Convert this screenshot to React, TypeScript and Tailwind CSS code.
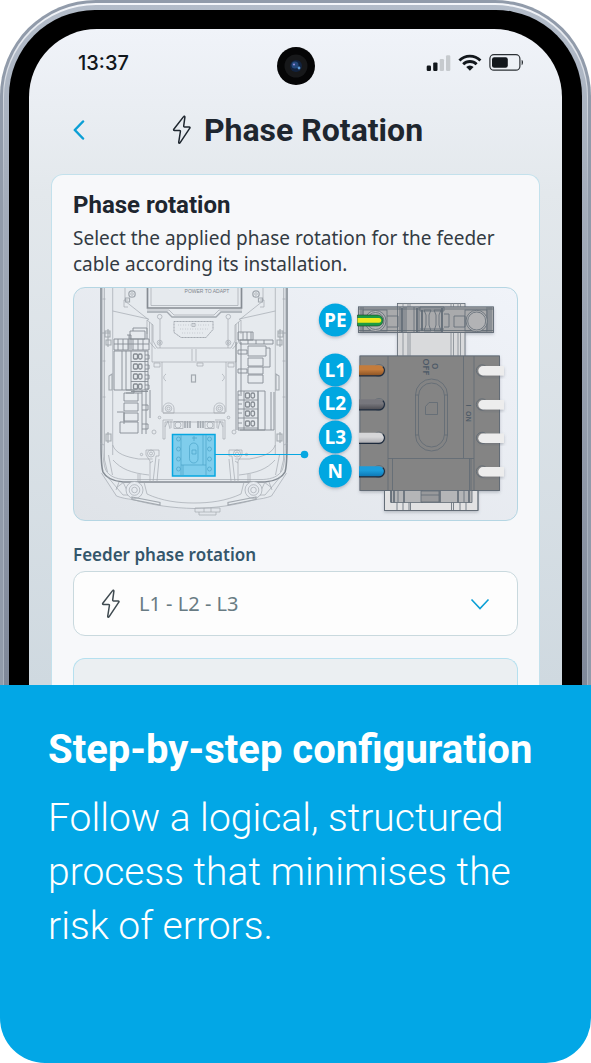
import type { ReactNode } from "react";

const feederOptions = ["L1 - L2 - L3", "L2 - L3 - L1", "L3 - L1 - L2"];

const badges = [
  { label: "PE", y: 320 },
  { label: "L1", y: 370 },
  { label: "L2", y: 403 },
  { label: "L3", y: 437 },
  { label: "N", y: 471 },
];

const wires = [
  { y: 370.5, from: "#c47c3c", to: "#8a5224" },
  { y: 404.5, from: "#77777d", to: "#4c4c52" },
  { y: 438, from: "#d6d6d8", to: "#a8a8ac" },
  { y: 471.5, from: "#1c9ddb", to: "#0d76b4" },
];

const BoltIcon = () => (
  <svg width="20" height="30" viewBox="0 0 20 30" fill="none" aria-hidden="true">
    <path
      d="M11.6 1.6 1.8 14.2c-.5.7-.1 1.3.6 1.3h5.2c.6 0 .9.4.8 1L6.7 27.4c-.1.9.8 1.1 1.3.4l9.8-14.6c.5-.7.1-1.3-.6-1.3h-4.7c-.6 0-.9-.4-.8-1l1.2-8.7c.1-.9-.8-1.3-1.3-.6Z"
      stroke="currentColor"
      strokeWidth="1.5"
      strokeLinejoin="round"
    />
  </svg>
);

const StatusIcons = () => (
  <svg width="98" height="20" viewBox="426 51 98 20" aria-hidden="true">
    <g fill="#12171c">
      <rect x="426.7" y="63.5" width="4.3" height="5.5" rx="1.2" />
      <rect x="433.2" y="60.4" width="4.3" height="8.6" rx="1.2" />
    </g>
    <g fill="#c6cace">
      <rect x="439.7" y="57" width="4.3" height="12" rx="1.2" />
      <rect x="446" y="53.3" width="4.3" height="15.7" rx="1.2" />
    </g>
    <g fill="none" stroke="#12171c" strokeWidth="2.8">
      <path d="M459.4 58.4a14.8 14.8 0 0 1 21 0" />
      <path d="M463.2 62.3a9.4 9.4 0 0 1 13.4 0" />
    </g>
    <path d="M466.2 65.1a5.2 5.2 0 0 1 7.4 0l-3.7 3.600Z" fill="#12171c" />
    <rect x="489.9" y="52.7" width="30" height="15.5" rx="4" fill="none" stroke="#2b3035" strokeWidth="1.2" />
    <rect x="492" y="55.200" width="15.8" height="10.5" rx="2.2" fill="#12171c" />
    <path d="M521.7 57.800c1.6.8 1.6 4.6 0 5.4Z" fill="#12171c" />
  </svg>
);

// One side of the charger housing, drawn again mirrored for the other side
const HousingSide = () => (
  <g>
    <path d="M101 287V443c0 14 0 23 2 29 3 6 10 9 20 10H194" strokeWidth="1.6" stroke="#858c94" />
    <path d="M102.8 287V443c0 15 1 22 3 27 3 6 10 9 19 9.5H194" />
    <path d="M104.5 287V460l3 12M112.7 287V455M108.5 455l4 20" />
    <path d="M100 443l4 2M102.5 299h3M102.5 361h3M102.5 397h3" />
    <path d="M101.5 473l15 23c5 2 11 3 16 3.5 21 6 41 8.5 61.5 9" />
    <path d="M107 476l10 12 6 7h16M119 482l-3 8M123 482l7 15M144 482l3 12c15 7 31 9 47 9M116 488l8-6" />
    <circle cx="134.5" cy="490" r="8.5" fill="#e6eaef" />
    <circle cx="134.5" cy="490" r="5.3" />
    <circle cx="134.5" cy="490" r="2.8" />
    <path d="M132 497l28 5.5v2.5l-28-5.5Z" strokeWidth="1.2" />
    <path d="M105 331h5v6h-5ZM106 340h5v5h-5ZM108 329v18M106 434h5v7h-5ZM108 432v11M110 333h-8M112 374v16h-3v-14Z" strokeWidth="1.1" />
    <path d="M112.7 311l36 8M125 287v14l24 19M128 300h-4v7h4" />
    <circle cx="132" cy="294" r="3.2" strokeWidth="1.3" />
    <circle cx="132" cy="294" r="1.3" />
    <path d="M125.5 298h4v4h-4Z" strokeWidth="1.2" />
    <path d="M147 320l6 5v16l4 7h3V319M147 320v14M149.5 322v20l6 7M160 348h34M152 362h42M152 324v38" />
    <circle cx="159.7" cy="316.7" r="2.3" />
    <circle cx="159.7" cy="342.7" r="2.5" />
    <circle cx="159.7" cy="342.7" r="1" />
    <path d="M162 362V412M154 363h6v4h-6ZM166 374c-3 2-3 5 0 7" />
    <path d="M163 413v-4c0-8 11-8 11 0v4Z" />
    <circle cx="168.5" cy="408.5" r="3.2" />
    <circle cx="168.5" cy="408.5" r="1.5" />
    <circle cx="159.5" cy="417.5" r="1.3" />
    <path d="M163 413h31M165 422h29M165 422v17h-2v-19h10M165 427l3-6 2 8M171 421v7" />
    <rect x="174" y="421.5" width="9" height="7" />
    <circle cx="178" cy="425" r="3" />
    <path d="M185 421v7M187.5 421v7M190 421v7" strokeWidth="1.6" />
    <path d="M146 450h13v6h-3l-3 26M146 450v5l4 6v21M153 461l-3 2" />
    <circle cx="151" cy="453.5" r="3.5" />
    <circle cx="151" cy="453.5" r="1.5" />
    <circle cx="141.5" cy="454.5" r="1.2" />
    <path d="M112.7 445c3 9 14 12 26 14h14M113 460c8 9 18 13 36 15M138 474v7M140 474v7" />
    <path d="M159 459l-2 22" />
    <circle cx="154" cy="432" r="2" />
  </g>
);

const ChargerOutline = () => (
  <g fill="none" stroke="#a3a9b0" strokeWidth="0.7">
    <path d="M101 287v185l16 24c48 16 106 16 154 0l16-24V287Z" fill="#e6eaee" stroke="none" />
    <HousingSide />
    <g transform="translate(388 0) scale(-1 1)">
      <HousingSide />
    </g>

    {/* display */}
    <path d="M147.5 287v21h94v-21" stroke="#868c93" strokeWidth="1.7" />
    <path d="M151 287v18.5h87V287" />
    <path d="M147 312h20l5 5h44l5-5h21" strokeWidth="1.3" />
    <path d="M147 310h22l5 5h40l5-5h23" />
    <text x="207" y="293" textAnchor="middle" fontSize="5" fill="#7f868d" stroke="none" className="font-['Liberation_Sans']">
      POWER TO ADAPT
    </text>
    <path d="M174 321.5h39v8l-7 8h-25l-7-5Z" />
    <path d="M174 321.5h39v8l-7 8h-25l-7-5Z" stroke="#8d949b" strokeDasharray="0.6 2.4" />
    <path d="M178 325h31M180 329h28M182 333h22" strokeDasharray="0.7 1.8" />
    <rect x="192" y="323.5" width="3" height="3" />
    <rect x="191.5" y="375" width="4" height="7" strokeWidth="1.2" />
    <path d="M192 349v12M196 349v12M197 363h6v3h-6Z" />

    {/* left terminals and breakers */}
    <g stroke="#868c93" strokeWidth="0.9">
      <path d="M114 339h35v11h-35ZM114 344h35M118 339v11M123 339v11M128 339v11M133 339v11M138 339v11M143 339v11" />
      <path d="M130 331h15v8h-15ZM133 331v-3h14v11M127 335h4v14M129 335v14" />
      <path d="M114 351h34v39h-34ZM122 351v39M126 351v39M131 351v39M145 351v39" />
      {[354, 364, 374, 384].map((y) => (
        <g key={y}>
          <rect x="133.5" y={y} width="4" height="5" rx="1" strokeWidth="1.3" />
          <rect x="138.5" y={y} width="3.5" height="5" rx="1.5" strokeWidth="1.3" />
          <path d={`M131 ${y + 7.5}h17M145 ${y + 1}h4v4h-4`} />
        </g>
      ))}
      <path d="M124 393h14v8h-14ZM124 403h14v8h-14ZM124 413h14v8h-14ZM120 422h18v11h-18ZM117 412h7v12M126 390h8v3h-8" />
      <path d="M138 393h4M142 390v44M146 390v44M150 390v28M142 405h6v5h-6M142 424h6v5h-6" />
    </g>

    {/* right terminals and breakers */}
    <g stroke="#868c93" strokeWidth="0.9">
      <path d="M238 332h15v8h-15ZM243 332v8M247 332v8M251 332v8M240 340h33v4h-33ZM248 340v4M256 340v4M264 340v4" />
      <path d="M248 346h18v10h-18ZM248 358h15v8h-15ZM248 367h15v7h-15ZM248 375h15v8h-15ZM266 348h4v19h-7" />
      <path d="M238 350h9v4h-9ZM238 369h9v4h-9ZM236 342v88M241 342v52" />
      <path d="M238 391h20v39h-20ZM258 391h7v39h-7ZM244 391v39M240 430h34v-38M271 392v38" />
      {[393, 402, 411, 421].map((y) => (
        <g key={y}>
          <rect x="245.5" y={y} width="4" height="5" rx="1" strokeWidth="1.3" />
          <rect x="251" y={y} width="3.5" height="5" rx="1.5" strokeWidth="1.3" />
          <path d={`M238 ${y + 7}h20M238 ${y + 2}h4`} />
        </g>
      ))}
    </g>

    <path d="M195 508h25v4h-25ZM199 512v3h17v-3M204 508v4M211 508v4" />

    {/* highlighted load switch */}
    <rect x="172.5" y="434.5" width="42.5" height="41.5" fill="#7fcdec" stroke="#06a7e1" strokeWidth="1.5" />
    <g stroke="#4ba3c8">
      <path d="M181 435v41M206 435v41M181 465h25M183 465v11M203 435v30" />
      <rect x="189.5" y="443" width="8.5" height="20" rx="4.25" />
      <path d="M192 450h4v4h-4ZM192 438h5M194 436v5" />
      {[439, 449, 459, 469].map((y) => (
        <g key={y}>
          <circle cx="178.5" cy={y} r="2" />
          <circle cx="209.5" cy={y} r="2" />
        </g>
      ))}
    </g>
    <path d="M215 454.5h90" stroke="#06a7e1" strokeWidth="1.1" />
    <circle cx="304.5" cy="454.5" r="3.8" fill="#06a7e1" stroke="none" />
  </g>
);

const LoadSwitch = () => (
  <g fill="none" stroke="#5f6974" strokeWidth="0.8">
    {/* rail behind the blocks */}
    <g filter="url(#soft)">
      <rect x="397.5" y="303.5" width="67.5" height="60" fill="#d9dadc" />
      <rect x="384.5" y="489" width="93.5" height="21.5" fill="#e2e2e3" />
      <rect x="358.5" y="307" width="135" height="25.5" fill="#aaabad" />
      <rect x="360" y="356" width="139.5" height="134.5" fill="#848484" />
    </g>
    <path d="M403 303v53M408 303v53M410 303v53M451 303v53M453.5 303v53M458 303v53M460.5 303v53" stroke="#82888f" />

    {/* earth terminal */}
    <rect x="358.5" y="307" width="135" height="25.5" fill="#a9aaac" />
    <path d="M358.5 309h135M358.5 330.5h135M361 307v25M363 307v25M491 307v25M489 307v25M487 307v25" />
    <rect x="363" y="310" width="24" height="21" />
    <circle cx="375.5" cy="321" r="10.5" fill="#b2b3b5" />
    <circle cx="375.5" cy="321" r="8.5" />
    <path d="M387 316h11v11h-11M397.5 307v25M400 307v25M404 307v25M406 307v25M414 307v25M419 307v25" />
    <path d="M402 308v24M417 308v24M442 308v24M422 310v21" strokeWidth="1.7" />
    <path d="M424 310h7l-2 5v10l2 6h-7l2-6v-10ZM434 310h7l-2 5v10l2 6h-7l2-6v-10Z" />
    <path d="M444 314h5v13h-5M454 316h11v11h-11ZM420 307h24v4h-24ZM420 329h24" />
    <rect x="465" y="310" width="22" height="21" />
    <circle cx="476.7" cy="321" r="10.7" fill="#b2b3b5" />
    <circle cx="476.7" cy="321" r="9" />
    <path d="M357.5 315h20a5.5 5.5 0 0 1 0 11h-20Z" fill="#1c9b45" stroke="#1a3c2a" strokeWidth="0.6" />
    <path d="M357.5 318h21.5c3 0 3 4.8 0 4.8h-21.5Z" fill="#efe81c" stroke="none" />

    {/* switch body */}
    <rect x="360" y="356" width="139.5" height="134.5" fill="#848484" />
    <path d="M388 356v134.5M474 356v134.5M463.5 356v102M388 458.5h86M392.5 458.5v32M469.5 458.5v32M471 458.5v32" />
    <path d="M415.5 395a16 16 0 0 1 32 0v40a16 16 0 0 1-32 0Z" />
    <path d="M418.5 396a13 13 0 0 1 26 0v38a13 13 0 0 1-26 0ZM415.5 395h3M444.5 395h3M415.5 435h3M444.5 435h3" />
    <path d="M429 402.5h8.5v12H425.5v-8Z" />
    <g fill="#4b5866" stroke="none" fontWeight="600" className="font-['Open_Sans']">
      <text transform="translate(423 358.5) rotate(90)" fontSize="9">OFF</text>
      <text transform="translate(431.5 363) rotate(90)" fontSize="8">O</text>
      <text transform="translate(466 404.5) rotate(90)" fontSize="7">I</text>
      <text transform="translate(466 411) rotate(90)" fontSize="7">ON</text>
    </g>

    {/* rail clip */}
    <path d="M384.5 490.5h93.5v20h-93.5Z" />
    <path d="M391 490.5h81v12h-81Z" fill="#b4b5b7" />
    <path d="M391 490.5v12M394 490.5v12M404 490.5v12M422 490.5v12M440 490.5v12M458 490.5v12M469 490.5v12" strokeWidth="1.6" />
    <path d="M421 491h18v11h-18ZM421 495h18" fill="#98999b" />
    <path d="M397 502.5v8M403 502.5v8M409 502.5v8M410.5 502.5v8M451.5 502.5v8M453.5 502.5v8M460 502.5v8M466 502.5v8M398 491v11M464 491v11" />

    {wires.map((wire, i) => (
      <g key={wire.y}>
        <defs>
          <linearGradient id={`wire-${i}`} x1="0" y1="0" x2="0" y2="1">
            <stop offset="0.4" stopColor={wire.from} />
            <stop offset="1" stopColor={wire.to} />
          </linearGradient>
        </defs>
        <circle cx="379" cy={wire.y} r="6" />
        <path d={`M359 ${wire.y - 5.2}h20a5.2 5.2 0 0 1 0 10.4h-20Z`} fill={`url(#wire-${i})`} stroke="none" />
        <path d={`M359 ${wire.y + 5.4}h20a5.4 5.4 0 0 0 3.8-9.2`} stroke="#1d2a3c" strokeWidth="1.1" />
        <circle cx="482" cy={wire.y} r="5.7" />
        <path
          d={`M504 ${wire.y - 4.5}h-21a4.5 4.5 0 0 0 0 9.4h21Z`}
          fill="#ededed"
          stroke="none"
          filter="url(#soft)"
        />
      </g>
    ))}
  </g>
);

const InstallationDiagram = () => (
  <svg
    viewBox="74 288 443 232"
    className="block w-full"
    role="img"
    aria-label="Charger wiring with the PE, L1, L2, L3 and N feeder terminals"
  >
    <defs>
      <filter id="soft" x="-20%" y="-20%" width="140%" height="150%">
        <feDropShadow dx="0" dy="1.5" stdDeviation="1.5" floodColor="#55606c" floodOpacity="0.35" />
      </filter>
    </defs>
    <ChargerOutline />
    <LoadSwitch />
    {badges.map((badge) => (
      <g key={badge.label}>
        <circle cx="335.3" cy={badge.y} r="16.5" fill="#06a7e1" filter="url(#soft)" />
        <text
          x="335.3"
          y={badge.y + 7}
          textAnchor="middle"
          fontSize="19"
          fontWeight="700"
          fill="#fff"
          className="font-['Open_Sans']"
        >
          {badge.label}
        </text>
      </g>
    ))}
  </svg>
);

const Camera = () => (
  <div className="absolute top-[18px] left-1/2 -translate-x-1/2">
    <svg width="38" height="38" viewBox="0 0 38 38" aria-hidden="true">
      <circle cx="19" cy="19" r="19" fill="#050506" />
      <circle cx="19" cy="19" r="11.5" fill="#17181a" />
      <circle cx="19" cy="19" r="6" fill="#12233f" />
      <circle cx="18" cy="18" r="3.5" fill="#24497c" />
      <circle cx="17" cy="17.5" r="1.1" fill="#8f8ad8" />
      <circle cx="22" cy="21" r="1.4" fill="#5f9ad6" />
    </svg>
  </div>
);

const PhoneFrame = ({ children }: { children: ReactNode }) => (
  <div className="rounded-t-[96px] bg-[#919baa] px-[3px] pt-[3px]">
    <div className="rounded-t-[93px] bg-linear-to-b from-[#f4f6fa] to-[#a9b2bf] to-30% px-px pt-[2px]">
      <div className="rounded-t-[92px] bg-linear-to-b from-[#b3bcc9] to-[#7f8899] px-[5px] pt-[5px]">
        <div className="rounded-t-[86px] bg-black px-5 pt-[19px]">
          <div className="relative overflow-hidden rounded-t-[68px] bg-linear-to-b from-[#f0f3f9] via-[#e3e8ec] via-25% to-[#cfd9e0]">
            {children}
          </div>
        </div>
      </div>
    </div>
  </div>
);

const App = () => {
  return (
    <div className="flex min-h-screen flex-col bg-white font-['Noto_Sans',sans-serif]">
      <PhoneFrame>
        <div className="flex h-[68px] items-center justify-between pr-[38px] pl-[49px]">
          <span className="font-['Inter',sans-serif] text-xl font-medium text-[#12171c]">13:37</span>
          <StatusIcons />
        </div>
        <Camera />

        <header className="flex h-[77px] items-center px-[38px] pb-3">
          <button type="button" aria-label="Back" className="flex h-8 w-6 items-center justify-center">
            <svg width="12" height="20" viewBox="0 0 12 20" fill="none" aria-hidden="true">
              <path d="M10 1.5 1.8 10l8.2 8.5" stroke="#0b9fd5" strokeWidth="2.5" strokeLinecap="round" strokeLinejoin="round" />
            </svg>
          </button>
          <div className="flex flex-1 items-center justify-center gap-3 pr-5 text-[#1e262f]">
            <BoltIcon />
            <h1 className="font-['Roboto',sans-serif] text-[32px] leading-10 font-bold">Phase Rotation</h1>
          </div>
        </header>

        <main className="mx-[22px] rounded-t-xl border border-b-0 border-[#c3e1ec] bg-[#f7f8fa] px-[21px] pt-3.5">
          <h2 className="font-['Roboto',sans-serif] text-2xl leading-8 font-bold text-[#1e262f]">
            Phase rotation
          </h2>
          <p className="mt-1 text-[19px] leading-[26px] text-[#333b43]">
            Select the applied phase rotation for the feeder cable according its installation.
          </p>

          <div className="mt-[10px] overflow-hidden rounded-xl border border-[#b5d6e3] bg-linear-to-tr from-[#dfe3e8] to-[#f0f3f9]">
            <InstallationDiagram />
          </div>

          <label htmlFor="feeder" className="mt-[22px] block text-[17px] leading-6 font-semibold text-[#34566b]">
            Feeder phase rotation
          </label>
          <div className="relative mt-1 text-[#3f4a50]">
            <select
              id="feeder"
              className="h-[65px] w-full appearance-none rounded-xl border border-[#c9d9de] bg-[#fdfdfd] pr-16 pl-[65px] text-xl text-[#687b83]"
            >
              {feederOptions.map((option) => (
                <option key={option}>{option}</option>
              ))}
            </select>
            <span className="pointer-events-none absolute inset-y-0 left-7 flex items-center">
              <BoltIcon />
            </span>
            <span className="pointer-events-none absolute inset-y-0 right-7 flex items-center">
              <svg width="20" height="12" viewBox="0 0 20 12" fill="none" aria-hidden="true">
                <path d="m1.5 1.5 8.5 9 8.5-9" stroke="#0b9fd5" strokeWidth="1.6" />
              </svg>
            </span>
          </div>

          <div className="mt-[22px] h-[27px] rounded-t-xl border border-b-0 border-[#b5e0ef] bg-[#ebeff2]" />
        </main>
      </PhoneFrame>

      <section className="flex-1 rounded-b-[45px] bg-[#02a7e6] px-12 pt-10 font-['Roboto',sans-serif] text-white">
        <h2 className="text-[40px] leading-[50px] font-bold">Step-by-step configuration</h2>
        <p className="mt-4 text-[39px] leading-[54px] font-light">
          Follow a logical, structured process that minimises the risk of errors.
        </p>
      </section>
    </div>
  );
};

export default App;
